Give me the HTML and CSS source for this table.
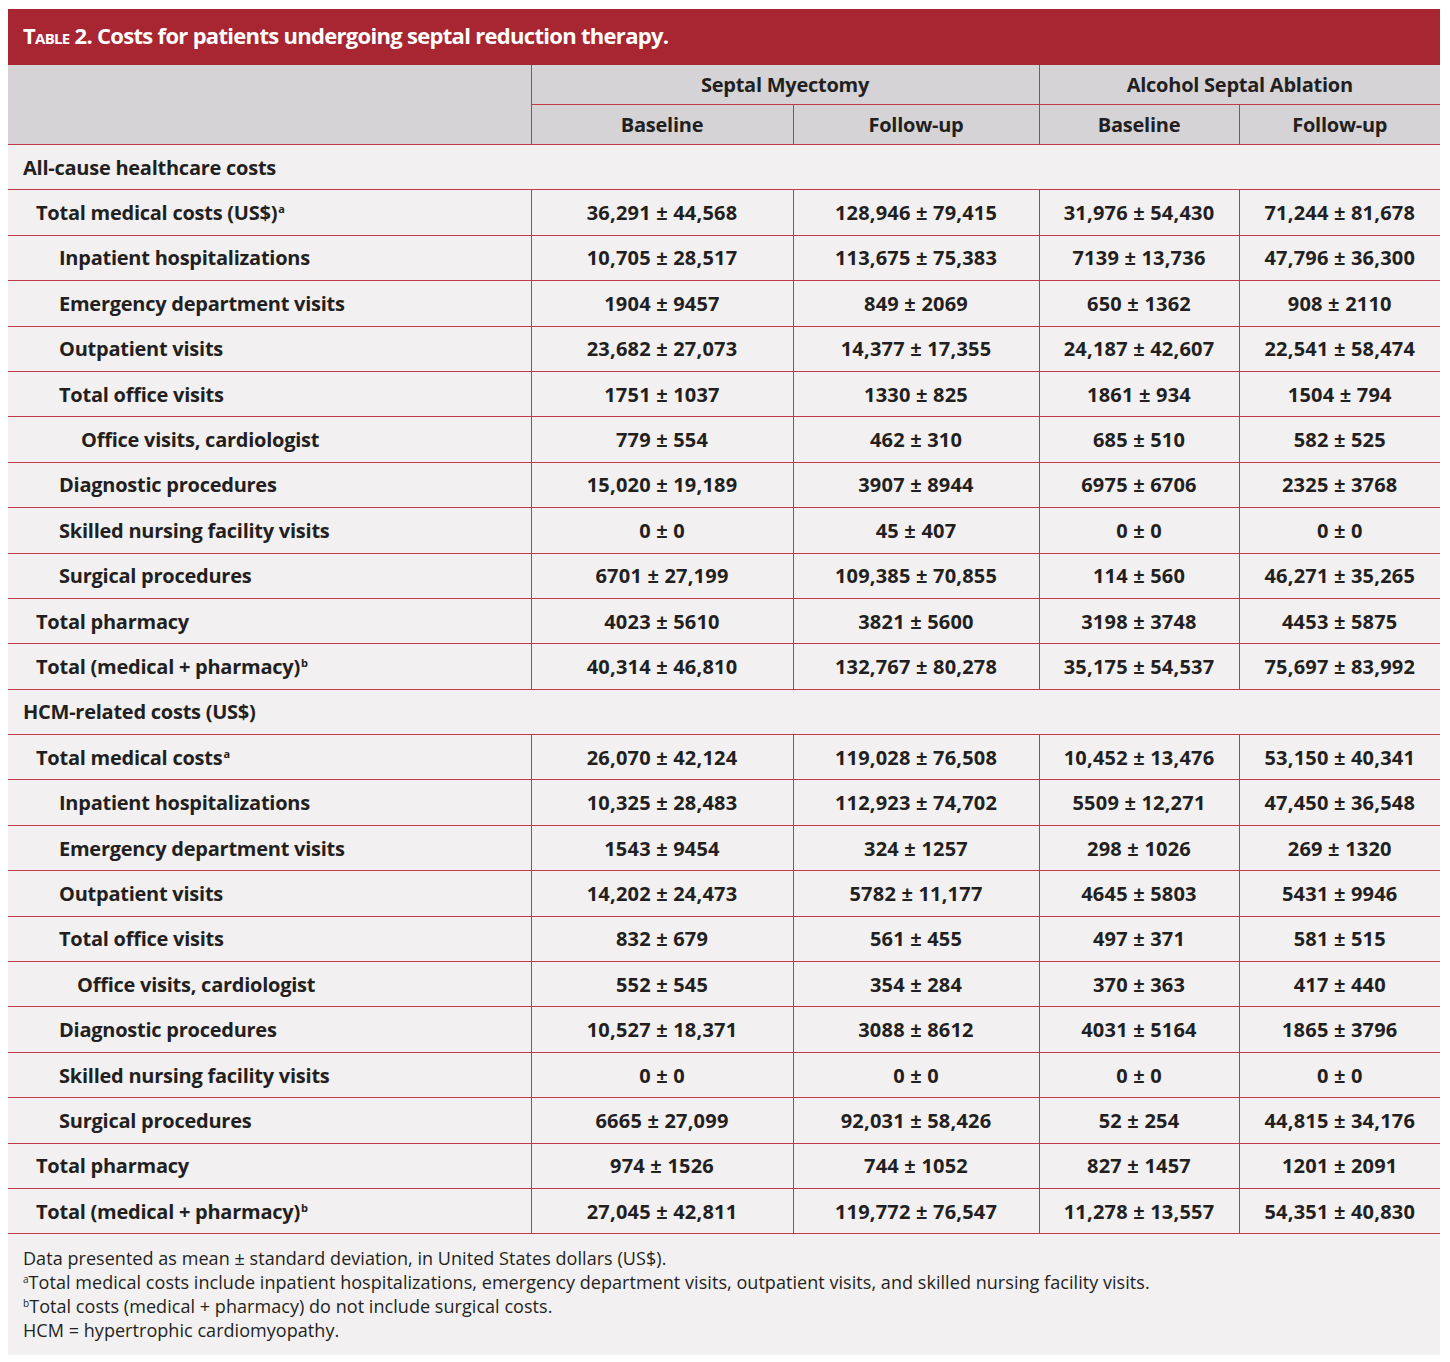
FILE: index.html
```html
<!DOCTYPE html>
<html lang="en">
<head>
<meta charset="utf-8">
<title>Table 2</title>
<link rel="stylesheet" href="styles.css">
</head>
<body>
<div class="figure">
  <div class="title"><span class="sc">Table</span> 2. Costs for patients undergoing septal reduction therapy.</div>
  <table class="costs">
    <colgroup>
      <col class="c-label"><col class="c-sm1"><col class="c-sm2"><col class="c-asa1"><col class="c-asa2">
    </colgroup>
    <thead>
      <tr class="h1">
        <th rowspan="2" class="blank"></th>
        <th colspan="2">Septal Myectomy</th>
        <th colspan="2">Alcohol Septal Ablation</th>
      </tr>
      <tr class="h2">
        <th>Baseline</th><th>Follow-up</th><th>Baseline</th><th>Follow-up</th>
      </tr>
    </thead>
    <tbody>
      <tr class="section"><td colspan="5">All-cause healthcare costs</td></tr>
      <tr><td class="l1">Total medical costs (US$)<sup>a</sup></td><td>36,291 ± 44,568</td><td>128,946 ± 79,415</td><td>31,976 ± 54,430</td><td>71,244 ± 81,678</td></tr>
      <tr><td class="l2">Inpatient hospitalizations</td><td>10,705 ± 28,517</td><td>113,675 ± 75,383</td><td>7139 ± 13,736</td><td>47,796 ± 36,300</td></tr>
      <tr><td class="l2">Emergency department visits</td><td>1904 ± 9457</td><td>849 ± 2069</td><td>650 ± 1362</td><td>908 ± 2110</td></tr>
      <tr><td class="l2">Outpatient visits</td><td>23,682 ± 27,073</td><td>14,377 ± 17,355</td><td>24,187 ± 42,607</td><td>22,541 ± 58,474</td></tr>
      <tr><td class="l2">Total office visits</td><td>1751 ± 1037</td><td>1330 ± 825</td><td>1861 ± 934</td><td>1504 ± 794</td></tr>
      <tr><td class="l3">Office visits, cardiologist</td><td>779 ± 554</td><td>462 ± 310</td><td>685 ± 510</td><td>582 ± 525</td></tr>
      <tr><td class="l2">Diagnostic procedures</td><td>15,020 ± 19,189</td><td>3907 ± 8944</td><td>6975 ± 6706</td><td>2325 ± 3768</td></tr>
      <tr><td class="l2">Skilled nursing facility visits</td><td>0 ± 0</td><td>45 ± 407</td><td>0 ± 0</td><td>0 ± 0</td></tr>
      <tr><td class="l2">Surgical procedures</td><td>6701 ± 27,199</td><td>109,385 ± 70,855</td><td>114 ± 560</td><td>46,271 ± 35,265</td></tr>
      <tr><td class="l1">Total pharmacy</td><td>4023 ± 5610</td><td>3821 ± 5600</td><td>3198 ± 3748</td><td>4453 ± 5875</td></tr>
      <tr><td class="l1">Total (medical + pharmacy)<sup>b</sup></td><td>40,314 ± 46,810</td><td>132,767 ± 80,278</td><td>35,175 ± 54,537</td><td>75,697 ± 83,992</td></tr>
      <tr class="section"><td colspan="5">HCM-related costs (US$)</td></tr>
      <tr><td class="l1">Total medical costs<sup>a</sup></td><td>26,070 ± 42,124</td><td>119,028 ± 76,508</td><td>10,452 ± 13,476</td><td>53,150 ± 40,341</td></tr>
      <tr><td class="l2">Inpatient hospitalizations</td><td>10,325 ± 28,483</td><td>112,923 ± 74,702</td><td>5509 ± 12,271</td><td>47,450 ± 36,548</td></tr>
      <tr><td class="l2">Emergency department visits</td><td>1543 ± 9454</td><td>324 ± 1257</td><td>298 ± 1026</td><td>269 ± 1320</td></tr>
      <tr><td class="l2">Outpatient visits</td><td>14,202 ± 24,473</td><td>5782 ± 11,177</td><td>4645 ± 5803</td><td>5431 ± 9946</td></tr>
      <tr><td class="l2">Total office visits</td><td>832 ± 679</td><td>561 ± 455</td><td>497 ± 371</td><td>581 ± 515</td></tr>
      <tr><td class="l3b">Office visits, cardiologist</td><td>552 ± 545</td><td>354 ± 284</td><td>370 ± 363</td><td>417 ± 440</td></tr>
      <tr><td class="l2">Diagnostic procedures</td><td>10,527 ± 18,371</td><td>3088 ± 8612</td><td>4031 ± 5164</td><td>1865 ± 3796</td></tr>
      <tr><td class="l2">Skilled nursing facility visits</td><td>0 ± 0</td><td>0 ± 0</td><td>0 ± 0</td><td>0 ± 0</td></tr>
      <tr><td class="l2">Surgical procedures</td><td>6665 ± 27,099</td><td>92,031 ± 58,426</td><td>52 ± 254</td><td>44,815 ± 34,176</td></tr>
      <tr><td class="l1">Total pharmacy</td><td>974 ± 1526</td><td>744 ± 1052</td><td>827 ± 1457</td><td>1201 ± 2091</td></tr>
      <tr><td class="l1">Total (medical + pharmacy)<sup>b</sup></td><td>27,045 ± 42,811</td><td>119,772 ± 76,547</td><td>11,278 ± 13,557</td><td>54,351 ± 40,830</td></tr>
    </tbody>
  </table>
  <div class="notes">
    <p>Data presented as mean ± standard deviation, in United States dollars (US$).</p>
    <p><sup>a</sup>Total medical costs include inpatient hospitalizations, emergency department visits, outpatient visits, and skilled nursing facility visits.</p>
    <p><sup>b</sup>Total costs (medical + pharmacy) do not include surgical costs.</p>
    <p>HCM = hypertrophic cardiomyopathy.</p>
  </div>
</div>
</body>
</html>
```

FILE: styles.css
```css
html, body {
  margin: 0;
  padding: 0;
  background: #ffffff;
}

body {
  padding: 9px 0 0 8px;
  font-family: "Open Sans", "Lato", "Liberation Sans", sans-serif;
  color: #231f20;
}

.figure {
  width: 1432px;
  background: #f2f0f1;
}

.title {
  background: #a82532;
  color: #ffffff;
  font-weight: 700;
  font-size: 22px;
  height: 56px;
  line-height: 53px;
  padding-left: 15px;
  letter-spacing: -0.7px;
}

.sc {
  font-variant: small-caps;
}

.costs {
  width: 1432px;
  border-collapse: collapse;
  table-layout: fixed;
  font-size: 20px;
  font-weight: 700;
  letter-spacing: -0.25px;
}

.c-label { width: 523px; }
.c-sm1 { width: 262px; }
.c-sm2 { width: 246px; }
.c-asa1 { width: 200px; }
.c-asa2 { width: 201px; }

.costs th {
  background: #d5d3d6;
  font-weight: 700;
  height: 39px;
  padding: 0;
  text-align: center;
  vertical-align: middle;
  border: 1px solid #c03a47;
}

.costs thead tr.h1 th {
  border-top: none;
}

.costs th:first-child,
.costs td:first-child {
  border-left: none;
}

.costs th:last-child,
.costs td:last-child {
  border-right: none;
}

.costs td {
  height: 44.4px;
  padding: 0;
  text-align: center;
  vertical-align: middle;
  border: 1px solid #c03a47;
  letter-spacing: 0.2px;
}

.costs td:first-child {
  text-align: left;
  letter-spacing: -0.25px;
}

.costs tr.section td {
  padding-left: 15px;
}

.costs td.l1 { padding-left: 28px; }
.costs td.l2 { padding-left: 51px; }
.costs td.l3 { padding-left: 73px; }
.costs td.l3b { padding-left: 69px; }

.costs sup {
  font-size: 11px;
  vertical-align: 7px;
  line-height: 0;
  margin-left: 1px;
}

.notes {
  padding: 12px 15px 13px;
  font-size: 18px;
  line-height: 24px;
  letter-spacing: 0.05px;
}

.notes p {
  margin: 0;
}

.notes sup {
  font-size: 10px;
  vertical-align: 6px;
  line-height: 0;
}
```
